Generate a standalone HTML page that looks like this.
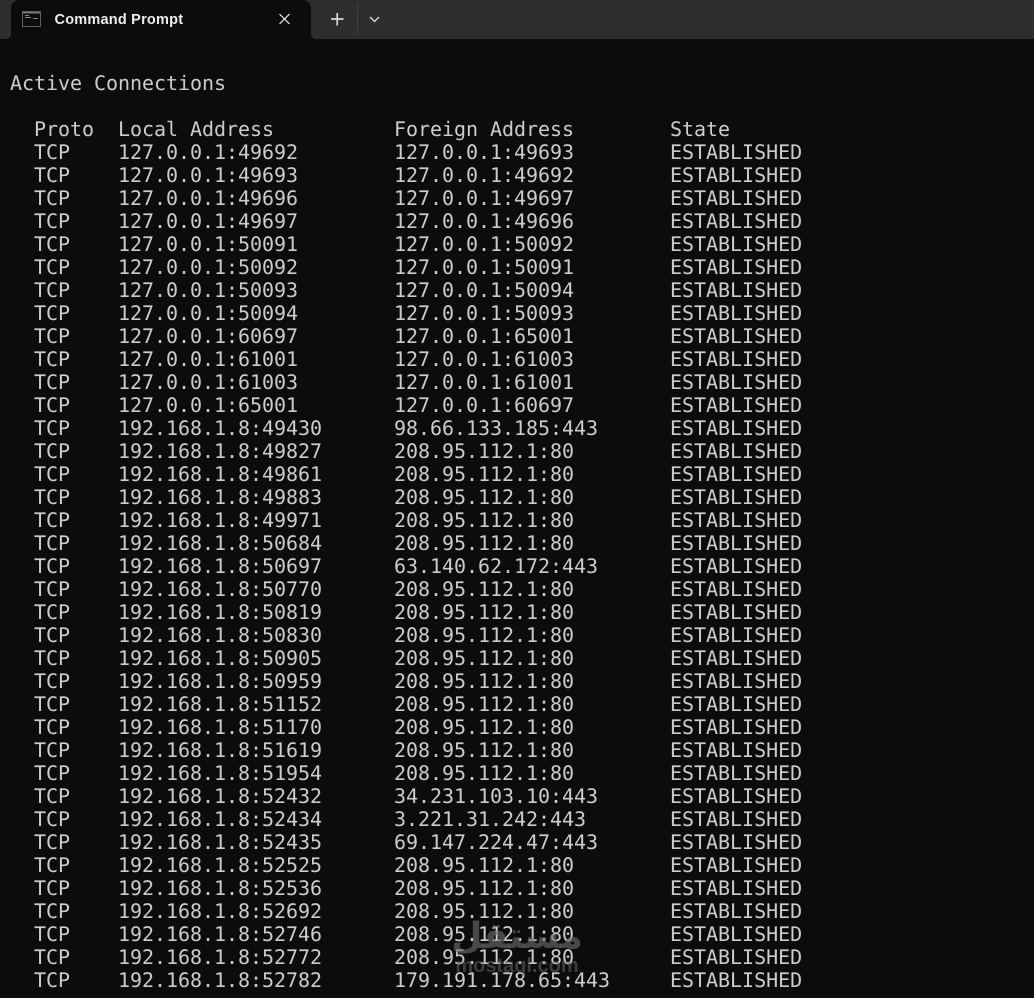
<!DOCTYPE html>
<html><head><meta charset="utf-8">
<style>
html,body{margin:0;padding:0;background:#0c0c0c;}
body{width:1034px;height:998px;position:relative;overflow:hidden;}
#bar{position:absolute;left:0;top:0;width:1034px;height:38.5px;background:#2e2e2e;}
#tab{position:absolute;left:11px;top:0;width:300px;height:39px;background:#0c0c0c;border-top-left-radius:8px;border-top-right-radius:8px;}
#lf{position:absolute;left:0;top:33px;width:11px;height:6px;background:#0c0c0c;}
#lf i{display:block;width:11px;height:6px;background:#2e2e2e;border-bottom-right-radius:5px;}
#rf{position:absolute;left:311px;top:33px;width:10px;height:6px;background:#0c0c0c;}
#rf i{display:block;width:10px;height:6px;background:#2e2e2e;border-bottom-left-radius:5px;}
#title{position:absolute;left:54.5px;top:10.5px;font:bold 14.5px/18px "Liberation Sans",sans-serif;letter-spacing:.22px;color:#ededed;white-space:pre;}
svg{position:absolute;left:0;top:0;}
pre{position:absolute;left:10px;top:72px;margin:0;font-family:"DejaVu Sans Mono","Liberation Mono",monospace;font-size:20px;letter-spacing:-.04px;text-rendering:geometricPrecision;line-height:23px;color:#cccccc;}
#wm{position:absolute;left:454px;top:912px;width:126px;height:66px;}
#ar{position:absolute;left:-20px;top:2px;width:166px;text-align:center;font:bold 36px/46px "DejaVu Sans",sans-serif;color:rgba(110,110,110,.62);direction:rtl;white-space:nowrap;}
#en{position:absolute;left:0;top:43px;width:126px;text-align:center;font:bold 20px/23px "Liberation Sans",sans-serif;color:rgba(110,110,110,.5);white-space:nowrap;}
</style></head>
<body>
<div id="bar"></div>
<div id="lf"><i></i></div>
<div id="rf"><i></i></div>
<div id="tab"></div>
<svg width="1034" height="40" viewBox="0 0 1034 40">
  <rect x="22.5" y="11.5" width="18" height="15" fill="#0c0c0c" stroke="#5f5f5f"/>
  <rect x="23" y="12" width="17" height="1.5" fill="#777"/>
  <path d="M25 15.5h4M25 17.5h6M33 18.5h5" stroke="#888" stroke-width="1" fill="none"/>
  <path d="M279.5 14L289.5 24M289.5 14L279.5 24" stroke="#f0f0f0" stroke-width="1.2" fill="none"/>
  <path d="M331 19H343.5M337.2 13V25.5" stroke="#d8d8d8" stroke-width="1.7" fill="none"/>
  <path d="M357.5 4V34" stroke="#4a4a4a" stroke-width="1" stroke-dasharray="2 1" fill="none"/>
  <path d="M370 17L374.5 21.5L379 17" stroke="#e0e0e0" stroke-width="1.3" fill="none"/>
</svg>
<div id="title">Command Prompt</div>
<pre>Active Connections

  Proto  Local Address          Foreign Address        State
  TCP    127.0.0.1:49692        127.0.0.1:49693        ESTABLISHED
  TCP    127.0.0.1:49693        127.0.0.1:49692        ESTABLISHED
  TCP    127.0.0.1:49696        127.0.0.1:49697        ESTABLISHED
  TCP    127.0.0.1:49697        127.0.0.1:49696        ESTABLISHED
  TCP    127.0.0.1:50091        127.0.0.1:50092        ESTABLISHED
  TCP    127.0.0.1:50092        127.0.0.1:50091        ESTABLISHED
  TCP    127.0.0.1:50093        127.0.0.1:50094        ESTABLISHED
  TCP    127.0.0.1:50094        127.0.0.1:50093        ESTABLISHED
  TCP    127.0.0.1:60697        127.0.0.1:65001        ESTABLISHED
  TCP    127.0.0.1:61001        127.0.0.1:61003        ESTABLISHED
  TCP    127.0.0.1:61003        127.0.0.1:61001        ESTABLISHED
  TCP    127.0.0.1:65001        127.0.0.1:60697        ESTABLISHED
  TCP    192.168.1.8:49430      98.66.133.185:443      ESTABLISHED
  TCP    192.168.1.8:49827      208.95.112.1:80        ESTABLISHED
  TCP    192.168.1.8:49861      208.95.112.1:80        ESTABLISHED
  TCP    192.168.1.8:49883      208.95.112.1:80        ESTABLISHED
  TCP    192.168.1.8:49971      208.95.112.1:80        ESTABLISHED
  TCP    192.168.1.8:50684      208.95.112.1:80        ESTABLISHED
  TCP    192.168.1.8:50697      63.140.62.172:443      ESTABLISHED
  TCP    192.168.1.8:50770      208.95.112.1:80        ESTABLISHED
  TCP    192.168.1.8:50819      208.95.112.1:80        ESTABLISHED
  TCP    192.168.1.8:50830      208.95.112.1:80        ESTABLISHED
  TCP    192.168.1.8:50905      208.95.112.1:80        ESTABLISHED
  TCP    192.168.1.8:50959      208.95.112.1:80        ESTABLISHED
  TCP    192.168.1.8:51152      208.95.112.1:80        ESTABLISHED
  TCP    192.168.1.8:51170      208.95.112.1:80        ESTABLISHED
  TCP    192.168.1.8:51619      208.95.112.1:80        ESTABLISHED
  TCP    192.168.1.8:51954      208.95.112.1:80        ESTABLISHED
  TCP    192.168.1.8:52432      34.231.103.10:443      ESTABLISHED
  TCP    192.168.1.8:52434      3.221.31.242:443       ESTABLISHED
  TCP    192.168.1.8:52435      69.147.224.47:443      ESTABLISHED
  TCP    192.168.1.8:52525      208.95.112.1:80        ESTABLISHED
  TCP    192.168.1.8:52536      208.95.112.1:80        ESTABLISHED
  TCP    192.168.1.8:52692      208.95.112.1:80        ESTABLISHED
  TCP    192.168.1.8:52746      208.95.112.1:80        ESTABLISHED
  TCP    192.168.1.8:52772      208.95.112.1:80        ESTABLISHED
  TCP    192.168.1.8:52782      179.191.178.65:443     ESTABLISHED</pre>
<div id="wm"><div id="ar">مستقل</div><div id="en">mostaql.com</div></div>
</body></html>
